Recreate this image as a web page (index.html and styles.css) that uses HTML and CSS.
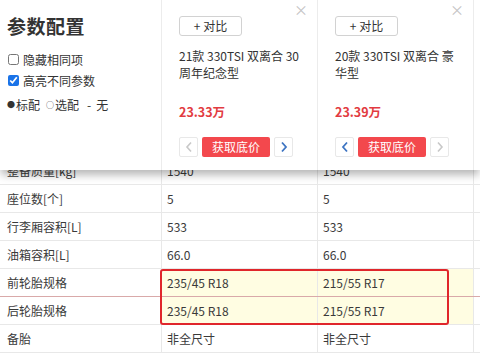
FILE: index.html
```html
<!DOCTYPE html>
<html lang="zh">
<head>
<meta charset="utf-8">
<link rel="stylesheet" href="styles.css">
</head>
<body>
<div class="page">
  <header class="head">
    <div class="side">
      <h1 class="title">参数配置</h1>
      <label class="opt"><input type="checkbox" class="cb"><span>隐藏相同项</span></label>
      <label class="opt"><input type="checkbox" class="cb" checked><span>高亮不同参数</span></label>
      <div class="legend"><span class="dot">●</span><span>标配</span><span class="ring">○</span><span>选配</span><span class="dash">-</span><span>无</span></div>
    </div>
    <div class="car">
      <span class="close">×</span>
      <button class="add">+ 对比</button>
      <div class="name">21款 330TSI 双离合 30<br>周年纪念型</div>
      <div class="price">23.33万</div>
      <div class="nav">
        <button class="arrow off"><svg width="8" height="12" viewBox="0 0 8 12"><path d="M6 1.5L2 6l4 4.5" fill="none" stroke="currentColor" stroke-width="1.6"/></svg></button>
        <button class="quote">获取底价</button>
        <button class="arrow on"><svg width="8" height="12" viewBox="0 0 8 12"><path d="M2 1.5L6 6l-4 4.5" fill="none" stroke="currentColor" stroke-width="1.8"/></svg></button>
      </div>
    </div>
    <div class="car">
      <span class="close">×</span>
      <button class="add">+ 对比</button>
      <div class="name">20款 330TSI 双离合 豪<br>华型</div>
      <div class="price">23.39万</div>
      <div class="nav">
        <button class="arrow on"><svg width="8" height="12" viewBox="0 0 8 12"><path d="M6 1.5L2 6l4 4.5" fill="none" stroke="currentColor" stroke-width="1.8"/></svg></button>
        <button class="quote">获取底价</button>
        <button class="arrow off"><svg width="8" height="12" viewBox="0 0 8 12"><path d="M2 1.5L6 6l-4 4.5" fill="none" stroke="currentColor" stroke-width="1.6"/></svg></button>
      </div>
    </div>
    <div class="car rest"></div>
  </header>

  <div class="table">
    <div class="row"><div class="c lab">整备质量[kg]</div><div class="c">1540</div><div class="c">1540</div><div class="c"></div></div>
    <div class="row"><div class="c lab">座位数[个]</div><div class="c">5</div><div class="c">5</div><div class="c"></div></div>
    <div class="row"><div class="c lab">行李厢容积[L]</div><div class="c">533</div><div class="c">533</div><div class="c"></div></div>
    <div class="row"><div class="c lab">油箱容积[L]</div><div class="c">66.0</div><div class="c">66.0</div><div class="c"></div></div>
    <div class="row hl first"><div class="c lab">前轮胎规格</div><div class="c">235/45 R18</div><div class="c">215/55 R17</div><div class="c"></div></div>
    <div class="row hl"><div class="c lab">后轮胎规格</div><div class="c">235/45 R18</div><div class="c">215/55 R17</div><div class="c"></div></div>
    <div class="row"><div class="c lab">备胎</div><div class="c">非全尺寸</div><div class="c">非全尺寸</div><div class="c"></div></div>
    <div class="mark"></div>
  </div>
</div>
</body>
</html>
```

FILE: styles.css
```css
* { box-sizing: border-box; }
html, body { margin: 0; padding: 0; background: #fff; }
body {
  font-family: "Noto Sans CJK SC", "Noto Sans", sans-serif;
  font-size: 12px;
  color: #333;
  width: 480px;
  height: 355px;
  overflow: hidden;
}
.page { width: 480px; }

.head {
  position: relative;
  z-index: 2;
  height: 170px;
  background: #fff;
  display: grid;
  grid-template-columns: 162px 156px 156px 1fr;
  box-shadow: 0 6px 8px -1px rgba(0, 0, 0, 0.28);
}
.side {
  padding: 10px 0 0 7px;
  border-right: 1px solid #ececec;
}
.title {
  margin: 0 0 7px 0;
  font-size: 19px;
  line-height: 32px;
  font-weight: bold;
  color: #333;
  letter-spacing: 0.5px;
}
.opt {
  display: flex;
  align-items: center;
  height: 21px;
  font-size: 12px;
  color: #333;
}
.cb {
  width: 11px;
  height: 11px;
  margin: 0 4px 0 1px;
  accent-color: #1a73e8;
}
.legend {
  margin-top: 4px;
  height: 20px;
  line-height: 20px;
  font-size: 12px;
  color: #333;
  display: flex;
  align-items: center;
}
.dot { font-size: 8px; margin-right: 1px; }
.ring { font-size: 8px; margin: 0 1px 0 6px; }
.dash { margin: 0 5px 0 8px; }

.car {
  position: relative;
  border-right: 1px solid #ececec;
  padding: 16px 0 0 17px;
}
.car.rest { border: 0; }
.close {
  position: absolute;
  top: 2px;
  right: 9px;
  font-size: 14px;
  line-height: 14px;
  color: #c4c4c4;
}
.add {
  display: block;
  width: 63px;
  height: 20px;
  padding: 0;
  border: 1px solid #d2d2d2;
  border-radius: 3px;
  background: #fff;
  font-family: inherit;
  font-size: 12px;
  color: #333;
  line-height: 18px;
}
.name {
  margin-top: 11px;
  line-height: 17px;
  font-size: 12px;
  color: #333;
  white-space: nowrap;
}
.price {
  margin-top: 23px;
  font-size: 12.5px;
  font-weight: bold;
  color: #e23b41;
  line-height: 16px;
}
.nav {
  margin-top: 17px;
  display: flex;
  gap: 4px;
  height: 20px;
}
.arrow {
  width: 19px;
  height: 20px;
  padding: 0;
  border: 1px solid #e8e8e8;
  border-radius: 2px;
  background: #fff;
  display: flex;
  align-items: center;
  justify-content: center;
}
.arrow.off { color: #c8c8c8; }
.arrow.on { color: #3d74c2; }
.quote {
  width: 68px;
  height: 20px;
  padding: 0;
  border: 0;
  border-radius: 2px;
  background: #f3484d;
  color: #fff;
  font-family: inherit;
  font-size: 12px;
  line-height: 20px;
}

.table {
  position: relative;
  margin-top: -13px;
}
.row {
  display: grid;
  grid-template-columns: 162px 156px 156px 1fr;
  height: 28px;
  border-bottom: 1px solid #e8e8e8;
}
.c {
  border-right: 1px solid #e8e8e8;
  padding-left: 5px;
  line-height: 27px;
  font-size: 12px;
  color: #3a3a3a;
  white-space: nowrap;
}
.c.lab { padding-left: 7px; }
.c:last-child { border-right: 0; }
.row.hl .c:nth-child(2), .row.hl .c:nth-child(3) { background: #fffde2; }
.row.first { border-bottom-color: #d9a9a9; }
.mark {
  position: absolute;
  left: 160px;
  top: 112px;
  width: 289px;
  height: 56px;
  border: 2px solid #e0262b;
  border-radius: 3px;
}
```
